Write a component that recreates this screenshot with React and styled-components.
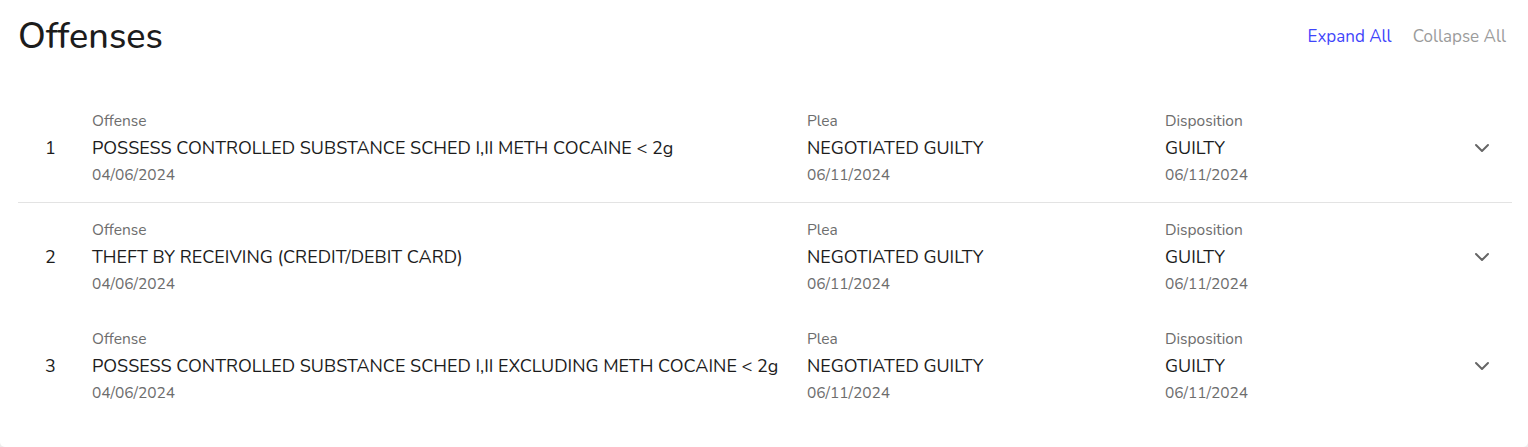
import React from "react";
import styled, { createGlobalStyle } from "styled-components";
import { ChevronDown } from "lucide-react";

const GlobalStyle = createGlobalStyle`
  html, body {
    margin: 0;
    padding: 0;
    background: #ededed;
  }
  body {
    font-family: "Nunito", "Lato", "Noto Sans", sans-serif;
    -webkit-font-smoothing: antialiased;
  }
`;

const OFFENSES = [
  {
    id: 1,
    offense: "POSSESS CONTROLLED SUBSTANCE SCHED I,II METH COCAINE < 2g",
    offenseDate: "04/06/2024",
    plea: "NEGOTIATED GUILTY",
    pleaDate: "06/11/2024",
    disposition: "GUILTY",
    dispositionDate: "06/11/2024",
  },
  {
    id: 2,
    offense: "THEFT BY RECEIVING (CREDIT/DEBIT CARD)",
    offenseDate: "04/06/2024",
    plea: "NEGOTIATED GUILTY",
    pleaDate: "06/11/2024",
    disposition: "GUILTY",
    dispositionDate: "06/11/2024",
  },
  {
    id: 3,
    offense:
      "POSSESS CONTROLLED SUBSTANCE SCHED I,II EXCLUDING METH COCAINE < 2g",
    offenseDate: "04/06/2024",
    plea: "NEGOTIATED GUILTY",
    pleaDate: "06/11/2024",
    disposition: "GUILTY",
    dispositionDate: "06/11/2024",
  },
];

const Field = ({ label, value, date }) => (
  <FieldWrap>
    <Label>{label}</Label>
    <Value>{value}</Value>
    <DateText>{date}</DateText>
  </FieldWrap>
);

const App = () => {
  return (
    <>
      <GlobalStyle />
      <Card>
        <Header>
          <Title>Offenses</Title>
          <Actions>
            <ActionLink active>Expand All</ActionLink>
            <ActionLink>Collapse All</ActionLink>
          </Actions>
        </Header>
        <List>
          {OFFENSES.map((o, i) => (
            <Row key={o.id} divided={i === 0}>
              <Num>{o.id}</Num>
              <Field label="Offense" value={o.offense} date={o.offenseDate} />
              <Field label="Plea" value={o.plea} date={o.pleaDate} />
              <Field
                label="Disposition"
                value={o.disposition}
                date={o.dispositionDate}
              />
              <Toggle aria-label="Expand">
                <ChevronDown size={24} strokeWidth={2} />
              </Toggle>
            </Row>
          ))}
        </List>
      </Card>
    </>
  );
};

const Card = styled.div`
  background: #ffffff;
  width: 1528px;
  height: 447px;
  box-sizing: border-box;
  border-radius: 0 0 5px 5px;
  padding: 0 16px 0 18px;
`;

const Header = styled.div`
  display: flex;
  align-items: center;
  justify-content: space-between;
  height: 72px;
`;

const Title = styled.h1`
  margin: 0;
  font-size: 36px;
  font-weight: 500;
  color: #1c1c1c;
`;

const Actions = styled.div`
  display: flex;
  gap: 21px;
  padding-right: 6px;
`;

const ActionLink = styled.span`
  font-size: 17px;
  color: ${(p) => (p.active ? "#3f45fb" : "#9b9b9b")};
  cursor: pointer;
`;

const List = styled.div`
  margin-top: 22px;
`;

const Row = styled.div`
  display: grid;
  grid-template-columns: 74px 715px 358px 1fr 60px;
  align-items: center;
  padding: 16px 0;
  border-bottom: 1px solid ${(p) => (p.divided ? "#e3e3e3" : "transparent")};
`;

const Num = styled.div`
  padding-left: 27px;
  font-size: 18px;
  color: #1c1c1c;
`;

const FieldWrap = styled.div`
  display: flex;
  flex-direction: column;
`;

const Label = styled.div`
  font-size: 15.5px;
  line-height: 22px;
  color: #6d6d6d;
`;

const Value = styled.div`
  font-size: 18px;
  line-height: 32px;
  color: #1c1c1c;
  white-space: nowrap;
`;

const DateText = styled.div`
  font-size: 15.5px;
  line-height: 22px;
  color: #6d6d6d;
`;

const Toggle = styled.button`
  justify-self: center;
  display: flex;
  align-items: center;
  justify-content: center;
  width: 24px;
  height: 24px;
  border: none;
  background: none;
  padding: 0;
  color: #666666;
  cursor: pointer;

  svg {
    flex-shrink: 0;
  }
`;

export default App;
